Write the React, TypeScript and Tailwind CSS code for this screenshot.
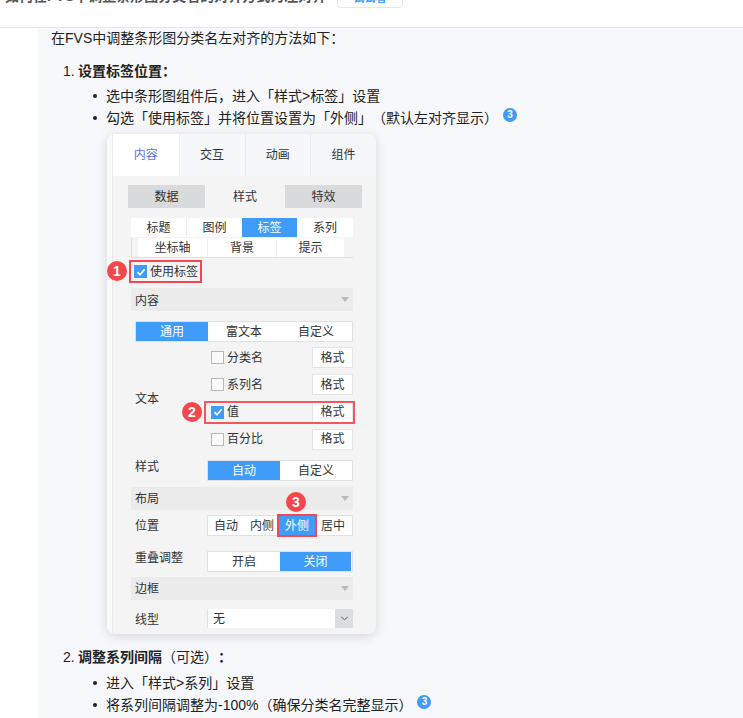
const F = `font-['Liberation_Sans','Noto_Sans_CJK_SC',sans-serif]`;

function Num({ n, className = "" }: { n: number; className?: string }) {
  return (
    <span className={`absolute z-10 flex h-[20px] w-[20px] items-center justify-center rounded-full bg-[#f5474c] text-[14px] font-bold text-white ${className}`}>
      {n}
    </span>
  );
}

function Check({ on }: { on: boolean }) {
  return on ? (
    <span className="flex h-[13px] w-[13px] shrink-0 items-center justify-center bg-[#3f9cf8]">
      <svg viewBox="0 0 12 12" className="h-[12px] w-[12px]">
        <path d="M2.5 6.2 5 8.8 9.6 3.2" fill="none" stroke="#fff" strokeWidth="1.7" />
      </svg>
    </span>
  ) : (
    <span className="h-[13px] w-[13px] shrink-0 border border-[#b5b7ba] bg-[#fafafa]" />
  );
}

function Section({ label }: { label: string }) {
  return (
    <div className="ml-[3px] flex h-[23px] w-[222px] items-center justify-between bg-[#ebebeb] pl-[4px] pr-[4px]">
      <span className="pt-[2px]">{label}</span>
      <span className="h-0 w-0 border-x-[4px] border-t-[5px] border-x-transparent border-t-[#b9babc]" />
    </div>
  );
}

function Seg({ items, active, widths }: { items: string[]; active: number; widths: string[] }) {
  return (
    <div className="flex h-[21px] border border-[#e0e1e3] bg-white">
      {items.map((t, i) => (
        <span key={t} className={`flex items-center justify-center pt-[1px] ${widths[i]} ${i === active ? "bg-[#3f9cf8] text-white" : ""}`}>
          {t}
        </span>
      ))}
    </div>
  );
}

function TextRow({ label, on }: { label: string; on: boolean }) {
  return (
    <div className="flex h-[21px] items-center">
      <Check on={on} />
      <span className="ml-[3px] flex-1">{label}</span>
      <span className="flex h-[21px] w-[41px] items-center justify-center border border-[#e4e5e6] bg-white">格式</span>
    </div>
  );
}

function Shot() {
  return (
    <div className="ml-[69px] mt-[5px] h-[500px] w-[269px] overflow-hidden rounded-[8px] bg-[#f4f4f5] text-[12px] leading-none text-[#333] shadow-[0_2px_12px_rgba(0,0,0,0.14)]">
      <div className="flex h-full">
        <div className="w-[6px] shrink-0 border-r border-[#e9e9ea] bg-[#fafafa]" />
        <div className="min-w-0 flex-1">
          <div className="flex h-[42px] bg-[#f5f7fa]">
            <span className="flex w-[66px] items-center justify-center bg-white text-[#5b72e8]">内容</span>
            <span className="flex w-[66px] items-center justify-center border-l border-[#e8ebef]">交互</span>
            <span className="flex w-[66px] items-center justify-center border-l border-[#e8ebef]">动画</span>
            <span className="flex w-[66px] items-center justify-center border-l border-[#e8ebef]">组件</span>
          </div>
          <div className="pl-[15px] pr-[9px] pt-[9px]">
            <div className="flex h-[23px]">
              <span className="flex w-[77px] items-center justify-center bg-[#d9dadb]">数据</span>
              <span className="flex w-[80px] items-center justify-center">样式</span>
              <span className="flex w-[77px] items-center justify-center bg-[#d9dadb]">特效</span>
            </div>
            <div className="ml-[3px] mt-[10px] flex h-[19px] w-[222px] bg-white">
              <span className="flex w-[55px] items-center justify-center">标题</span>
              <span className="flex w-[56px] items-center justify-center border-l border-[#eee]">图例</span>
              <span className="flex w-[55px] items-center justify-center bg-[#3f9cf8] text-white">标签</span>
              <span className="flex w-[56px] items-center justify-center">系列</span>
            </div>
            <div className="ml-[3px] mt-[1px] flex h-[20px] w-[222px] border-b border-l border-[#dfe0e1] pl-[6px]">
              <span className="flex w-[69px] items-center justify-center bg-white">坐标轴</span>
              <span className="flex w-[69px] items-center justify-center border-l border-[#eee] bg-white">背景</span>
              <span className="flex w-[68px] items-center justify-center border-l border-[#eee] bg-white">提示</span>
            </div>
            <div className="relative mt-[2px] h-[23px]">
              <Num n={1} className="left-[-21px] top-[1px]" />
              <div className="ml-[1px] flex h-[23px] w-[73px] items-center gap-[3px] border-2 border-[#f2484f] pl-[3px]">
                <Check on />
                <span>使用标签</span>
              </div>
            </div>
            <div className="mt-[5px]"><Section label="内容" /></div>
            <div className="ml-[7px] mt-[10px] w-[218px]">
              <Seg items={["通用", "富文本", "自定义"]} active={0} widths={["w-[72px]", "w-[72px]", "w-[72px]"]} />
            </div>
            <div className="ml-[7px] mt-[5px] flex">
              <span className="mt-[46px] w-[72px] shrink-0">文本</span>
              <div className="flex w-[146px] flex-col gap-[6.33px] pl-[4px]">
                <TextRow label="分类名" on={false} />
                <TextRow label="系列名" on={false} />
                <div className="relative">
                  <TextRow label="值" on />
                  <span className="pointer-events-none absolute left-[-7px] top-[-1px] h-[23px] w-[151px] border-2 border-[#f2585e]" />
                  <Num n={2} className="left-[-29px] top-[0px]" />
                </div>
                <TextRow label="百分比" on={false} />
              </div>
            </div>
            <div className="ml-[7px] mt-[10px] flex">
              <span className="w-[72px] shrink-0 pt-[1px]">样式</span>
              <div className="w-[146px]">
                <Seg items={["自动", "自定义"]} active={0} widths={["w-[72px]", "w-[72px]"]} />
              </div>
            </div>
            <div className="mt-[6px]"><Section label="布局" /></div>
            <div className="relative ml-[7px] mt-[5px] flex h-[21px] items-center">
              <span className="w-[72px] shrink-0 pt-[2px]">位置</span>
              <div className="flex h-[21px] w-[146px] border border-[#e0e1e3] bg-white">
                <span className="flex w-[36px] items-center justify-center pt-[1px]">自动</span>
                <span className="flex w-[36px] items-center justify-center pt-[1px]">内侧</span>
                <span className="ml-[-1px] flex w-[36px] items-center justify-center bg-[#3f9cf8] pt-[1px] text-white outline-2 outline-[#f2484f]">外侧</span>
                <span className="flex w-[36px] items-center justify-center pt-[1px]">居中</span>
              </div>
              <Num n={3} className="left-[151px] top-[-23px]" />
            </div>
            <div className="ml-[7px] mt-[15px] flex">
              <span className="w-[72px] shrink-0 pt-[1px]">重叠调整</span>
              <div className="w-[146px]">
                <Seg items={["开启", "关闭"]} active={1} widths={["w-[72px]", "w-[71px]"]} />
              </div>
            </div>
            <div className="mt-[5px]"><Section label="边框" /></div>
            <div className="ml-[7px] mt-[9px] flex h-[19px] items-center">
              <span className="w-[72px] shrink-0 pt-[3px]">线型</span>
              <div className="flex h-[19px] w-[146px] border-l border-[#e0e1e3] bg-white">
                <span className="flex flex-1 items-center pl-[5px] pt-[1px]">无</span>
                <span className="flex w-[18px] items-center justify-center bg-[#dcdddf]">
                  <svg viewBox="0 0 10 6" className="h-[5px] w-[9px]"><path d="M1 1l4 3.5L9 1" fill="none" stroke="#444" strokeWidth="1" /></svg>
                </span>
              </div>
            </div>
          </div>
        </div>
      </div>
    </div>
  );
}

function Ref() {
  return (
    <span className="ml-[5px] inline-flex h-[14px] w-[14px] -translate-y-[4px] items-center justify-center rounded-full bg-[#3f9cf8] align-middle text-[10px] font-bold leading-none text-white">3</span>
  );
}

function Bullet({ children }: { children: React.ReactNode }) {
  return (
    <div className="relative pl-[68px]">
      <span className="absolute left-[55px] top-[9px] h-[4px] w-[4px] rounded-full bg-[#222]" />
      {children}
    </div>
  );
}

export default function App() {
  return (
    <div className={`${F} h-[718px] w-[743px] overflow-hidden bg-white text-[14px] text-[#222] [text-spacing-trim:space-all]`}>
      <div className="relative h-[28px] border-b border-[#e6e7ea]">
        <div className="absolute left-[5px] top-[-13px] text-[14px] font-bold leading-[18px] text-[#555]">
          如何在FVS中调整条形图分类名的对齐方式为左对齐
        </div>
        <div className="absolute left-[337px] top-[-10px] flex h-[18px] w-[66px] items-start justify-center rounded-[4px] border border-[#dce9f6] bg-white text-[11px] font-bold leading-[14px] text-[#3f9cf8]">
          试试看
        </div>
      </div>
      <div className="ml-[38px] h-[690px] bg-[#f7f8fc] leading-[22px]">
        <div className="h-[20px] pl-[13px] leading-[20px]">在FVS中调整条形图分类名左对齐的方法如下：</div>
        <div className="mt-[12px] pl-[25px]"><span className="inline-block w-[15px]">1.</span><span className="font-bold">设置标签位置：</span></div>
        <div className="mt-[3px]">
          <Bullet>选中条形图组件后，进入「样式&gt;标签」设置</Bullet>
          <Bullet>勾选「使用标签」并将位置设置为「外侧」（默认左对齐显示）<Ref /></Bullet>
        </div>
        <Shot />
        <div className="mt-[12px] pl-[25px]"><span className="inline-block w-[15px]">2.</span><span className="font-bold">调整系列间隔</span>（可选）<span className="font-bold">：</span></div>
        <div className="mt-[4px]">
          <Bullet>进入「样式&gt;系列」设置</Bullet>
          <Bullet>将系列间隔调整为-100%（确保分类名完整显示）<Ref /></Bullet>
        </div>
      </div>
    </div>
  );
}
